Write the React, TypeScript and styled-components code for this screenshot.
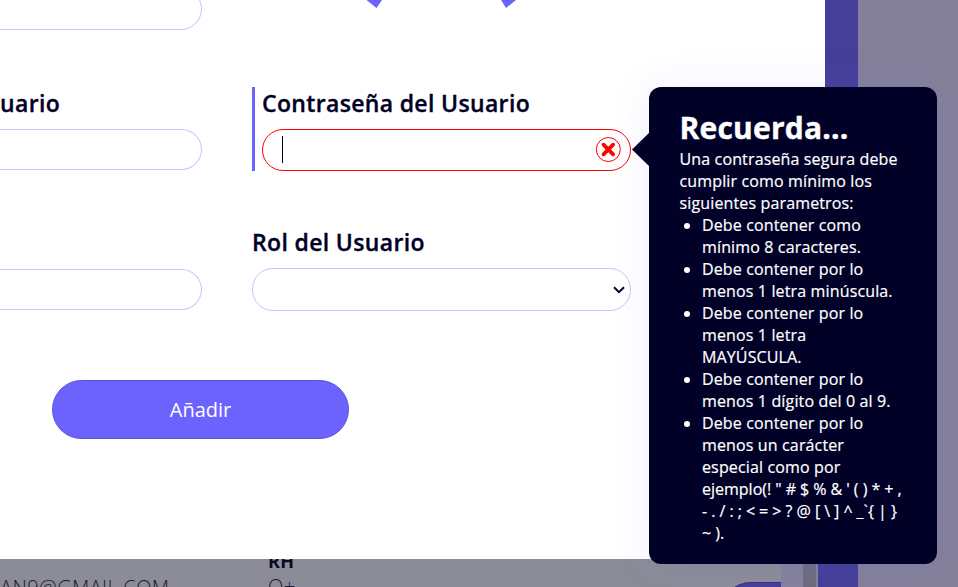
import React from "react";
import styled, { createGlobalStyle } from "styled-components";

const GlobalStyle = createGlobalStyle`
  * { box-sizing: border-box; }
  body { margin: 0; overflow: hidden; font-family: "Open Sans", sans-serif; color: #010026; }
`;

const Page = styled.div`
  position: relative;
  display: grid;
  grid-template-columns: 781px 22px 13px 2px 40px 1fr;
  width: 958px;
  height: 587px;
  overflow: hidden;
`;

const Card = styled.div`
  display: grid;
  grid-template-columns: 268px 1fr auto;
  align-items: start;
  overflow: hidden;
  background: #8c8c98;
  padding-top: 549px;
`;

const CardColumn = styled.div<{ $offset?: number }>`
  display: flex;
  flex-direction: column;
  padding-top: ${(p) => p.$offset ?? 0}px;
  font-size: 20px;
  font-weight: 300;
  line-height: 27px;
  letter-spacing: 0.4px;
  color: #1b1a30;
  white-space: nowrap;
`;

const CardHeading = styled.strong`
  font-size: 18px;
  line-height: 24px;
  font-weight: 700;
  color: #080820;
`;

const CardAction = styled.div`
  width: 60px;
  height: 60px;
  margin-top: 33px;
  border: 1px solid #38327f;
  border-right: 0;
  border-radius: 30px 0 0 30px;
  background: #453f99;
`;

const Stripe = styled.div<{ $color: string }>`
  background: ${(p) => p.$color};
`;

const Modal = styled.main`
  position: absolute;
  inset: 0 auto auto 0;
  width: 825px;
  height: 559px;
  overflow: hidden;
  background: #fff;
`;

const Shape = styled.svg`
  position: absolute;
  top: 0;
  left: 360px;
`;

const Form = styled.form`
  display: grid;
  grid-template-columns: 202px 379px;
  grid-template-rows: 30px 84px 84px 59px;
  column-gap: 50px;
  row-gap: 56px;
`;

const Field = styled.div<{ $active?: boolean; $height?: number }>`
  display: flex;
  flex-direction: column;
  justify-content: flex-end;
  border-left: ${(p) => (p.$active ? "3px solid #6c63ff" : "0")};
  padding-left: ${(p) => (p.$active ? 7 : 0)}px;
  margin-top: ${(p) => (p.$active ? 1 : 0)}px;
  height: ${(p) => (p.$active ? "84px" : p.$height ? `${p.$height}px` : "auto")};
`;

const Label = styled.label<{ $height?: number }>`
  height: ${(p) => p.$height ?? 43}px;
  font-size: 23px;
  font-weight: 600;
  line-height: 33px;
  letter-spacing: 0.34px;
  -webkit-text-stroke: 0.35px currentColor;
  white-space: nowrap;
`;

const Control = styled.div<{ $error?: boolean; $cut?: boolean; $height?: number }>`
  display: flex;
  align-items: center;
  justify-content: space-between;
  flex: none;
  height: ${(p) => p.$height ?? 42}px;
  padding: 0 9px 1px 20px;
  border: 1px solid ${(p) => (p.$error ? "#ff0000" : "#c9c3ff")};
  border-left-width: ${(p) => (p.$cut ? 0 : 1)}px;
  border-radius: ${(p) => (p.$cut ? "0 21px 21px 0" : "21px")};
`;

const Caret = styled.span`
  width: 1px;
  height: 27px;
  margin-left: -1px;
  background: #010026;
`;

const SelectControl = styled(Control)`
  justify-content: flex-end;
  padding: 0 5px 0 20px;
`;

const Submit = styled.button`
  grid-column: 1 / -1;
  width: 297px;
  height: 59px;
  margin: 14px 0 0 52px;
  border: 1px solid #5a52d5;
  border-radius: 30px;
  background: #6c63ff;
  color: #fff;
  font: 400 20px/27px "Open Sans", sans-serif;
`;

const Tooltip = styled.aside`
  position: absolute;
  top: 87px;
  left: 649px;
  width: 288px;
  height: 477px;
  padding: 20px 31.5px 0 30.5px;
  border-radius: 12px;
  background: #010026;
  box-shadow: 0 0 40px rgba(108, 99, 255, 0.1);
  color: #fff;
  font-size: 16px;
  line-height: 22px;
  letter-spacing: 0.14px;
  -webkit-text-stroke: 0.2px currentColor;
`;

const Arrow = styled.svg`
  position: absolute;
  top: 45px;
  left: -17px;
`;

const Title = styled.h2`
  margin: 0;
  font-size: 30px;
  font-weight: 700;
  line-height: 41px;
  letter-spacing: 0.2px;
  -webkit-text-stroke: 0.4px currentColor;
`;

const Text = styled.p`
  margin: 0;
`;

const Rules = styled.ul`
  margin: 0;
  padding-left: 22.5px;
`;

const Symbols = styled.span`
  letter-spacing: 0;
  word-spacing: -0.1px;
`;

const rules = [
  "Debe contener como mínimo 8 caracteres.",
  "Debe contener por lo menos 1 letra minúscula.",
  "Debe contener por lo menos 1 letra MAYÚSCULA.",
  "Debe contener por lo menos 1 dígito del 0 al 9.",
];

export default function App() {
  return (
    <>
      <GlobalStyle />
      <Page>
        <Card>
          <CardColumn $offset={25}>AN9@GMAIL.COM</CardColumn>
          <CardColumn>
            <CardHeading>RH</CardHeading>
            <span>O+</span>
          </CardColumn>
          <CardAction />
        </Card>
        <Stripe $color="#85819c" />
        <Stripe $color="#6e6d7e" />
        <Stripe $color="#85819c" />
        <Stripe $color="#453f99" />
        <Stripe $color="#84809a" />

        <Modal>
          <Shape width="170" height="10" fill="#6c63ff">
            <path d="M6.5 0L16.5 8L22 0ZM141 0L146 8L156 0Z" />
          </Shape>
          <Form>
            <Field>
              <Control $cut />
            </Field>
            <span />
            <Field>
              <Label $height={42}>uario</Label>
              <Control $cut $height={41} />
            </Field>
            <Field $active>
              <Label>Contraseña del Usuario</Label>
              <Control $error>
                <Caret />
                <svg width="26" height="26" viewBox="0 0 26 26" fill="none" stroke="#ff0000">
                  <circle cx="13.3" cy="12.5" r="12" strokeWidth="1" />
                  <path d="M8.5 7.7L18.1 17.3M18.1 7.7L8.5 17.3" strokeWidth="3.8" strokeLinecap="round" />
                </svg>
              </Control>
            </Field>
            <Field>
              <Control $cut $height={41} />
            </Field>
            <Field $height={85}>
              <Label>Rol del Usuario</Label>
              <SelectControl $height={43}>
                <svg width="12" height="8" viewBox="0 0 12 8" fill="none" stroke="#010026" strokeWidth="2">
                  <path d="M1 1.2L6 6.2L11 1.2" />
                </svg>
              </SelectControl>
            </Field>
            <Submit type="button">Añadir</Submit>
          </Form>
        </Modal>

        <Tooltip>
          <Arrow width="18" height="35" fill="#010026">
            <path d="M0 17.5L18 0V35Z" />
          </Arrow>
          <Title>Recuerda...</Title>
          <Text>Una contraseña segura debe cumplir como mínimo los siguientes parametros:</Text>
          <Rules>
            {rules.map((rule) => (
              <li key={rule}>{rule}</li>
            ))}
            <li>
              Debe contener por lo menos un carácter especial como por{" "}
              <Symbols>{"ejemplo(! \" # $ % & ' ( ) * + , - . / : ; < = > ? @ [ \\ ] ^ _`{ | } ~ )."}</Symbols>
            </li>
          </Rules>
        </Tooltip>
      </Page>
    </>
  );
}
